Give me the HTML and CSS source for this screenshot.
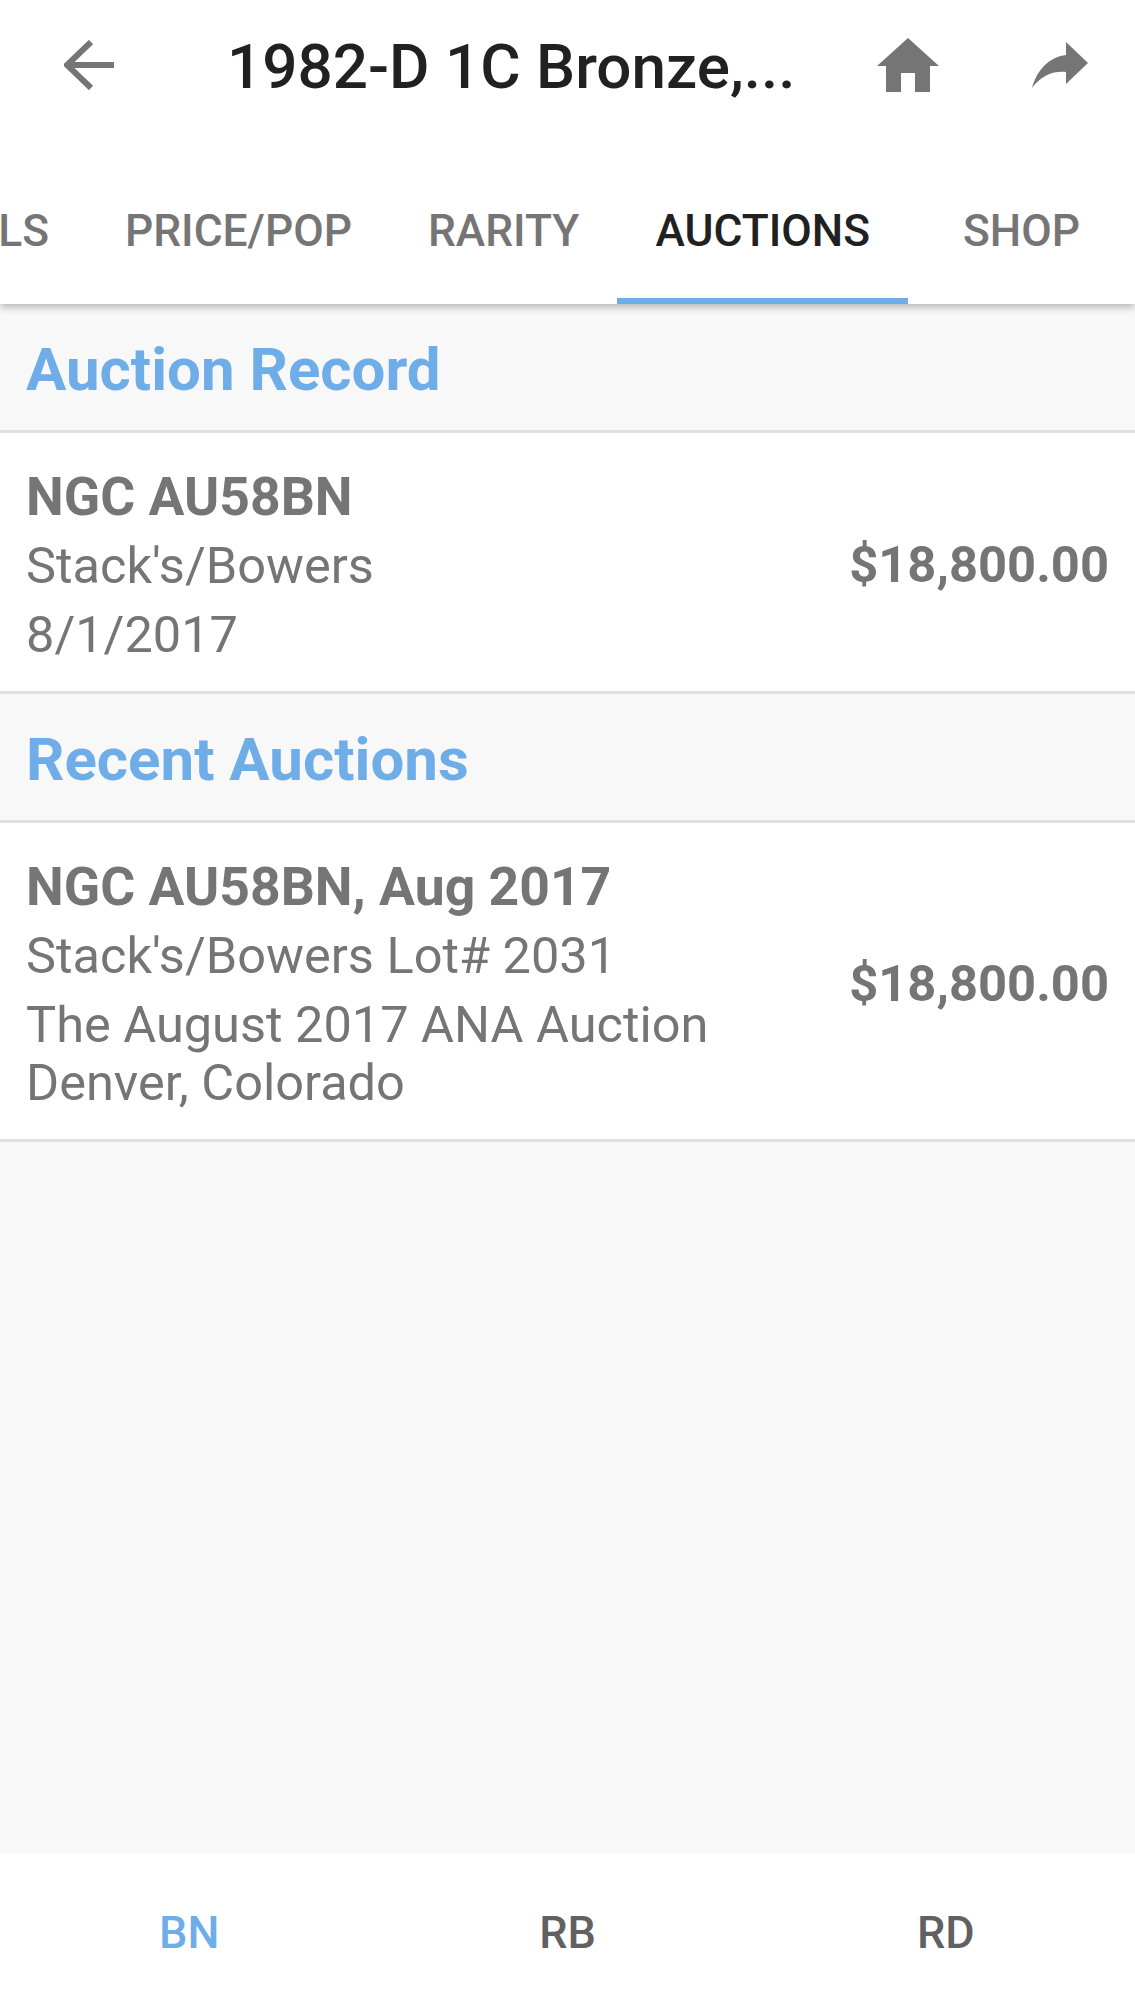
FILE: index.html
```html
<!DOCTYPE html>
<html lang="en">
<head>
<meta charset="UTF-8">
<title>Auctions</title>
<link rel="stylesheet" href="styles.css">
</head>
<body>

<div class="app">
  <div class="top-bar">
    <div class="title-row">
      <svg class="icon-back" viewBox="0 0 50 50"><path d="M50 25H4M27 2L3 25l24 23" fill="none" stroke="#757575" stroke-width="6"/></svg>
      <div class="title">1982-D 1C Bronze,...</div>
      <svg class="icon-home" viewBox="0 0 62 54"><path d="M31 0L62 28H53V54H38V35H24V54H9V28H0Z" fill="#757575"/></svg>
      <svg class="icon-share" viewBox="0 0 56 46"><path d="M0 46C5 28 17 15 34 13V0L56 21L34 42V30C21 29 10 33 0 46Z" fill="#757575"/></svg>
    </div>
    <div class="tabs">
      <div class="tab">DETAILS</div>
      <div class="tab">PRICE/POP</div>
      <div class="tab">RARITY</div>
      <div class="tab active">AUCTIONS</div>
      <div class="tab shop">SHOP</div>
    </div>
  </div>

  <div class="content">
    <div class="section-head">Auction Record</div>
    <div class="row">
      <div class="row-text">
        <div class="row-title">NGC AU58BN</div>
        <p>Stack's/Bowers</p>
        <p>8/1/2017</p>
      </div>
      <div class="price">$18,800.00</div>
    </div>

    <div class="section-head">Recent Auctions</div>
    <div class="row">
      <div class="row-text">
        <div class="row-title">NGC AU58BN, Aug 2017</div>
        <p>Stack's/Bowers Lot# 2031</p>
        <p>The August 2017 ANA Auction<br>Denver, Colorado</p>
      </div>
      <div class="price">$18,800.00</div>
    </div>
  </div>

  <div class="bottom-tabs">
    <div class="bottom-tab active">BN</div>
    <div class="bottom-tab">RB</div>
    <div class="bottom-tab">RD</div>
  </div>
</div>

</body>
</html>
```

FILE: styles.css
```css
body {
  margin: 0;
  font-family: Roboto, "Liberation Sans", sans-serif;
  background-color: #f8f8f8;
}

.app {
  display: flex;
  flex-direction: column;
  height: 2000px;
  overflow: hidden;
}

/* Pasek gorny */
.top-bar {
  position: relative;
  z-index: 1;
  height: 304px;
  background-color: #fff;
  box-shadow: 0 3px 8px rgba(0, 0, 0, 0.28);
}

.title-row {
  display: flex;
  align-items: center;
  height: 130px;
}

.icon-back {
  width: 50px;
  height: 50px;
  margin-left: 64px;
}

.title {
  width: 650px;
  margin-left: 113px;
  padding-top: 2px;
  font-size: 62px;
  font-weight: 500;
  color: #212121;
}

.icon-home {
  width: 62px;
  height: 54px;
}

.icon-share {
  width: 56px;
  height: 46px;
  margin-left: 93px;
}

.tabs {
  display: flex;
  justify-content: flex-end;
  height: 174px;
  overflow: hidden;
}

.tab {
  flex: none;
  box-sizing: border-box;
  height: 174px;
  padding: 69px 38px 0;
  font-size: 44.3px;
  line-height: 64px;
  font-weight: 500;
  color: #757575;
}

.tab.active {
  color: #212121;
  border-bottom: 6px solid #6fade8;
}

.tab.shop {
  width: 227px;
  padding-left: 0;
  padding-right: 0;
  text-align: center;
}

/* Lista */
.content {
  flex: 1;
}

.section-head {
  box-sizing: border-box;
  height: 129px;
  padding: 33px 26px 0;
  font-size: 60px;
  line-height: 66px;
  font-weight: 700;
  color: #6fade8;
  border-bottom: 3px solid #e0e0e0;
}

.row {
  display: flex;
  align-items: center;
  justify-content: space-between;
  padding: 35px 26px 27px;
  background-color: #fff;
  border-bottom: 3px solid #e0e0e0;
  color: #757575;
}

.row-title {
  font-size: 53.5px;
  line-height: 58px;
  font-weight: 700;
}

.row-text p {
  margin: 11px 0 0;
  font-size: 50.5px;
  line-height: 58px;
}

.price {
  padding-bottom: 3px;
  font-size: 50.7px;
  font-weight: 700;
}

/* Dolne zakladki */
.bottom-tabs {
  display: flex;
  height: 147px;
  background-color: #fff;
}

.bottom-tab {
  flex: 1;
  padding-top: 56px;
  text-align: center;
  font-size: 45px;
  line-height: 48px;
  font-weight: 500;
  color: #616161;
}

.bottom-tab.active {
  color: #6fade8;
}
```
